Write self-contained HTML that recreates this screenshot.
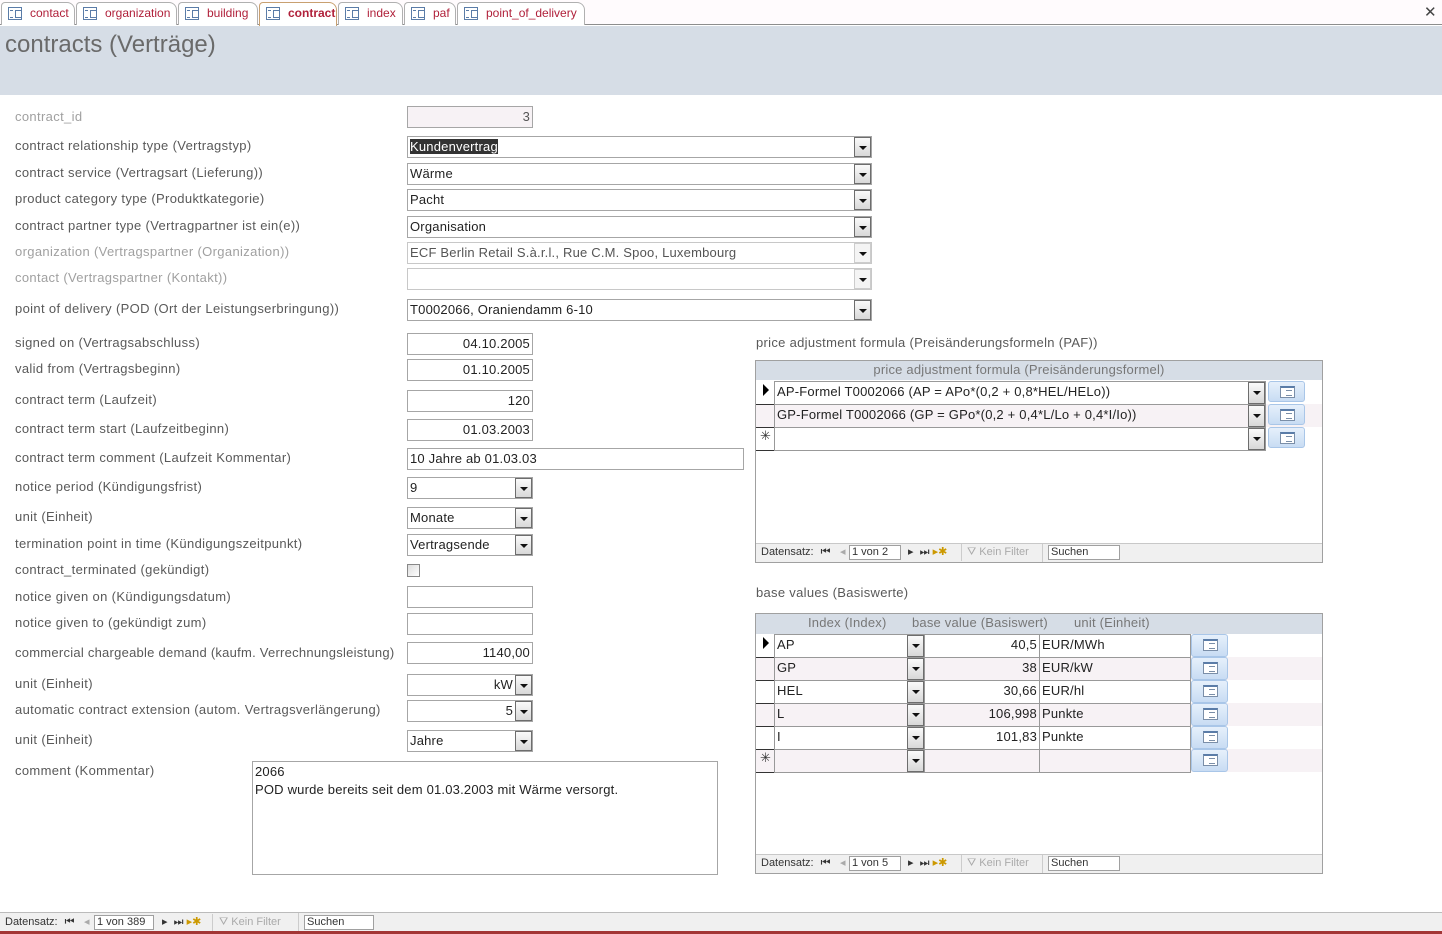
<!DOCTYPE html>
<html><head><meta charset="utf-8"><style>
*{box-sizing:border-box;margin:0;padding:0}
body{width:1442px;height:934px;position:relative;background:#fff;font-family:"Liberation Sans",sans-serif;font-size:13px;color:#333;overflow:hidden}
.a{position:absolute;white-space:nowrap}
.l{position:absolute;left:15px;color:#595959;white-space:nowrap;line-height:16px;margin-top:1px;letter-spacing:.35px}
.l.g{color:#a0a0a0}
.f{position:absolute;border:1px solid #a6a6a6;background:#fff;height:22px;line-height:20px;padding:0 2px;white-space:nowrap;overflow:hidden;color:#222;letter-spacing:.2px}
.r{text-align:right}
.dd{position:absolute;right:0;top:0;width:17px;height:20px;border:1px solid #6d6d6d;background:linear-gradient(#fafafa,#d8d8d8)}
.dd:after{content:"";position:absolute;left:4px;top:8px;border-left:4px solid transparent;border-right:4px solid transparent;border-top:4px solid #111}
.tab{position:absolute;top:2px;height:23px;border:1px solid #b0b0b0;border-bottom:none;border-radius:4px 8px 0 0;background:#fff;color:#b0203a;font-size:12px;line-height:21px;padding-left:28px}
.ti{position:absolute;left:6px;top:4px;width:14px;height:13px;border:1px solid #5a7ca8;background:#fff}
.ti:before{content:"";position:absolute;left:1px;top:2px;width:3px;height:6px;border-top:1px solid #5a7ca8;border-bottom:1px solid #5a7ca8}
.ti:after{content:"";position:absolute;left:6px;top:2px;width:5px;height:6px;border:1px solid #5a7ca8}
.btn{position:absolute;width:37px;height:21px;border:1px solid #a9c6e8;border-radius:3px;background:linear-gradient(#e6f0fb,#c8dcf3)}
.bi{position:absolute;left:11px;top:4px;width:15px;height:12px;border:1px solid #7a8ea8;border-top:2px solid #5a7ca8;background:#fff}
.bi:after{content:"";position:absolute;left:5px;top:2px;width:6px;height:4px;border-top:1px solid #7a8ea8;border-bottom:1px solid #7a8ea8}
.nav{position:absolute;height:19px;background:#f0f0f0;border-top:1px solid #c8c8c8;font-size:11px;color:#333;line-height:17px}
.nb{position:absolute;top:1px;height:15px;border:1px solid #a0a0a0;background:#fff;padding-left:2px;line-height:13px}
</style></head><body>
<div class="a" style="left:0;top:0;width:1442px;height:25px;background:#fffbfd;border-bottom:1px solid #8d8d8d"></div>
<div class="tab" style="left:1px;width:74px"><i class="ti"></i>contact</div>
<div class="tab" style="left:76px;width:101px"><i class="ti"></i>organization</div>
<div class="tab" style="left:178px;width:80px"><i class="ti"></i>building</div>
<div class="tab" style="left:259px;width:78px;font-weight:bold;border-color:#c8a070;height:24px"><i class="ti"></i>contract</div>
<div class="tab" style="left:338px;width:65px"><i class="ti"></i>index</div>
<div class="tab" style="left:404px;width:52px"><i class="ti"></i>paf</div>
<div class="tab" style="left:457px;width:128px"><i class="ti"></i>point_of_delivery</div>
<div class="a" style="left:1424px;top:3px;font-size:15px;color:#444">✕</div>
<div class="a" style="left:0;top:26px;width:1442px;height:69px;background:#d6dde6"></div>
<div class="a" style="left:5px;top:31px;font-size:24px;color:#6a6a6a">contracts (Verträge)</div>
<div class="l g" style="top:108px">contract_id</div>
<div class="l" style="top:137px">contract relationship type (Vertragstyp)</div>
<div class="l" style="top:164px">contract service (Vertragsart (Lieferung))</div>
<div class="l" style="top:190px">product category type (Produktkategorie)</div>
<div class="l" style="top:217px">contract partner type (Vertragpartner ist ein(e))</div>
<div class="l g" style="top:243px">organization (Vertragspartner (Organization))</div>
<div class="l g" style="top:269px">contact (Vertragspartner (Kontakt))</div>
<div class="l" style="top:300px">point of delivery (POD (Ort der Leistungserbringung))</div>
<div class="l" style="top:334px">signed on (Vertragsabschluss)</div>
<div class="l" style="top:360px">valid from (Vertragsbeginn)</div>
<div class="l" style="top:391px">contract term (Laufzeit)</div>
<div class="l" style="top:420px">contract term start (Laufzeitbeginn)</div>
<div class="l" style="top:449px">contract term comment (Laufzeit Kommentar)</div>
<div class="l" style="top:478px">notice period (Kündigungsfrist)</div>
<div class="l" style="top:508px">unit (Einheit)</div>
<div class="l" style="top:535px">termination point in time (Kündigungszeitpunkt)</div>
<div class="l" style="top:561px">contract_terminated (gekündigt)</div>
<div class="l" style="top:588px">notice given on (Kündigungsdatum)</div>
<div class="l" style="top:614px">notice given to (gekündigt zum)</div>
<div class="l" style="top:644px;letter-spacing:.25px">commercial chargeable demand (kaufm. Verrechnungsleistung)</div>
<div class="l" style="top:675px">unit (Einheit)</div>
<div class="l" style="top:701px">automatic contract extension (autom. Vertragsverlängerung)</div>
<div class="l" style="top:731px">unit (Einheit)</div>
<div class="l" style="top:762px">comment (Kommentar)</div>
<div class="f r" style="left:407px;top:106px;width:126px;background:#f7f2f5;color:#555">3</div>
<div class="f" style="left:407px;top:136px;width:465px"><span style="background:#333;color:#fff;">Kundenvertrag</span><i class="dd"></i></div>
<div class="f" style="left:407px;top:163px;width:465px">Wärme<i class="dd"></i></div>
<div class="f" style="left:407px;top:189px;width:465px">Pacht<i class="dd"></i></div>
<div class="f" style="left:407px;top:216px;width:465px">Organisation<i class="dd"></i></div>
<div class="f" style="left:407px;top:242px;width:465px;color:#555;border-color:#c8c8c8">ECF Berlin Retail S.à.r.l., Rue C.M. Spoo, Luxembourg<i class="dd" style="border-color:#ccc;background:#f4f4f4"></i></div>
<div class="f" style="left:407px;top:268px;width:465px;border-color:#c8c8c8"><i class="dd" style="border-color:#ccc;background:#f4f4f4"></i></div>
<div class="f" style="left:407px;top:299px;width:465px">T0002066, Oraniendamm 6-10<i class="dd"></i></div>
<div class="f r" style="left:407px;top:333px;width:126px">04.10.2005</div>
<div class="f r" style="left:407px;top:359px;width:126px">01.10.2005</div>
<div class="f r" style="left:407px;top:390px;width:126px">120</div>
<div class="f r" style="left:407px;top:419px;width:126px">01.03.2003</div>
<div class="f" style="left:407px;top:448px;width:337px">10 Jahre ab 01.03.03</div>
<div class="f" style="left:407px;top:477px;width:126px">9<i class="dd"></i></div>
<div class="f" style="left:407px;top:507px;width:126px">Monate<i class="dd"></i></div>
<div class="f" style="left:407px;top:534px;width:126px">Vertragsende<i class="dd"></i></div>
<div class="a" style="left:407px;top:564px;width:13px;height:13px;border:1px solid #888;background:linear-gradient(135deg,#ddd,#fff)"></div>
<div class="f" style="left:407px;top:586px;width:126px"></div>
<div class="f" style="left:407px;top:613px;width:126px"></div>
<div class="f r" style="left:407px;top:642px;width:126px">1140,00</div>
<div class="f r" style="left:407px;top:674px;width:126px;padding-right:19px">kW<i class="dd"></i></div>
<div class="f r" style="left:407px;top:700px;width:126px;padding-right:19px">5<i class="dd"></i></div>
<div class="f" style="left:407px;top:730px;width:126px">Jahre<i class="dd"></i></div>
<div class="f" style="left:252px;top:761px;width:466px;height:114px;white-space:normal;line-height:18px;padding-top:1px">2066<br>POD wurde bereits seit dem 01.03.2003 mit Wärme versorgt.</div>
<div class="a" style="left:756px;top:335px;color:#595959;letter-spacing:.3px">price adjustment formula (Preisänderungsformeln (PAF))</div>
<div class="a" style="left:755px;top:360px;width:568px;height:203px;border:1px solid #a0a0a0"></div>
<div class="a" style="left:756px;top:361px;width:566px;height:19px;background:#d6dde6;color:#777;text-align:center;line-height:18px;padding-right:40px;letter-spacing:.2px">price adjustment formula (Preisänderungsformel)</div>
<div class="a" style="left:756px;top:404px;width:566px;height:23px;background:#f7f2f5"></div>
<div class="f" style="left:774px;top:381px;width:492px;height:24px;border-color:#999">AP-Formel T0002066 (AP = APo*(0,2 + 0,8*HEL/HELo))<i class="dd" style="height:22px"></i></div>
<div class="f" style="left:774px;top:404px;width:492px;height:24px;border-color:#999;background:#f7f2f5">GP-Formel T0002066 (GP = GPo*(0,2 + 0,4*L/Lo + 0,4*I/Io))<i class="dd" style="height:22px"></i></div>
<div class="f" style="left:774px;top:427px;width:492px;height:24px;border-color:#999"><i class="dd" style="height:22px"></i></div>
<div class="a" style="left:756px;top:404px;width:18px;border-top:1px solid #333"></div>
<div class="a" style="left:756px;top:427px;width:18px;border-top:1px solid #333"></div>
<div class="a" style="left:756px;top:450px;width:18px;border-top:1px solid #333"></div>
<div class="a" style="left:763px;top:384px;border-top:6px solid transparent;border-bottom:6px solid transparent;border-left:6px solid #000"></div>
<div class="a" style="left:760px;top:428px;font-size:13px">✳</div>
<div class="btn" style="left:1268px;top:381px"><i class="bi"></i></div>
<div class="btn" style="left:1268px;top:404px"><i class="bi"></i></div>
<div class="btn" style="left:1268px;top:427px"><i class="bi"></i></div>
<div class="nav" style="left:756px;top:543px;width:566px">
<span class="a" style="left:5px">Datensatz: <b style="font-weight:normal;margin-left:4px">⏮</b></span>
<span class="a" style="left:84px;color:#aaa">◂</span>
<span class="nb" style="left:93px;width:52px">1 von 2</span>
<span class="a" style="left:152px">▸ &nbsp;⏭ <span style="color:#c90">▸✱</span></span>
<span class="a" style="left:205px;color:#aaa;border-left:1px solid #ccc;padding-left:5px">⛛ Kein Filter</span>
<span class="a" style="left:286px;height:18px;border-left:1px solid #ccc"></span>
<span class="nb" style="left:292px;width:72px">Suchen</span></div>
<div class="a" style="left:756px;top:585px;color:#595959;letter-spacing:.3px">base values (Basiswerte)</div>
<div class="a" style="left:755px;top:613px;width:568px;height:261px;border:1px solid #a0a0a0"></div>
<div class="a" style="left:756px;top:614px;width:566px;height:20px;background:#d6dde6;color:#777;line-height:18px;letter-spacing:.2px">
<span class="a" style="left:52px">Index (Index)</span><span class="a" style="left:156px">base value (Basiswert)</span><span class="a" style="left:318px">unit (Einheit)</span></div>
<div class="a" style="left:756px;top:657px;width:566px;height:23px;background:#f7f2f5"></div>
<div class="a" style="left:756px;top:703px;width:566px;height:23px;background:#f7f2f5"></div>
<div class="a" style="left:756px;top:749px;width:566px;height:23px;background:#f7f2f5"></div>
<div id="bv"></div>
<div class="a" style="left:763px;top:637px;border-top:6px solid transparent;border-bottom:6px solid transparent;border-left:6px solid #000"></div>
<div class="a" style="left:760px;top:750px;font-size:13px">✳</div>
<div class="nav" style="left:756px;top:854px;width:566px">
<span class="a" style="left:5px">Datensatz: <b style="font-weight:normal;margin-left:4px">⏮</b></span>
<span class="a" style="left:84px;color:#aaa">◂</span>
<span class="nb" style="left:93px;width:52px">1 von 5</span>
<span class="a" style="left:152px">▸ &nbsp;⏭ <span style="color:#c90">▸✱</span></span>
<span class="a" style="left:205px;color:#aaa;border-left:1px solid #ccc;padding-left:5px">⛛ Kein Filter</span>
<span class="a" style="left:286px;height:18px;border-left:1px solid #ccc"></span>
<span class="nb" style="left:292px;width:72px">Suchen</span></div>
<div class="nav" style="left:0;top:912px;width:1442px;height:20px;border-top:1px solid #bbb">
<span class="a" style="left:5px;top:1px">Datensatz: <b style="font-weight:normal;margin-left:4px">⏮</b></span>
<span class="a" style="left:84px;top:1px;color:#aaa">◂</span>
<span class="nb" style="left:94px;top:2px;width:60px">1 von 389</span>
<span class="a" style="left:162px;top:1px">▸ &nbsp;⏭ <span style="color:#c90">▸✱</span></span>
<span class="a" style="left:212px;top:1px;color:#aaa;border-left:1px solid #ccc;padding-left:6px">⛛ Kein Filter</span>
<span class="a" style="left:298px;height:19px;border-left:1px solid #ccc"></span>
<span class="nb" style="left:304px;top:2px;width:70px">Suchen</span></div>
<div class="a" style="left:0;top:931px;width:1442px;height:3px;background:#a33535"></div>
<script>
var rows=[["AP","40,5","EUR/MWh"],["GP","38","EUR/kW"],["HEL","30,66","EUR/hl"],["L","106,998","Punkte"],["I","101,83","Punkte"],["","",""]];
var h="";
rows.forEach(function(r,i){var y=634+i*23;var bg=(i%2)?"#f7f2f5":"#fff";
h+='<div class="f" style="left:774px;top:'+y+'px;width:151px;height:24px;border-color:#999;background:'+bg+'">'+r[0]+'<i class="dd" style="height:22px"></i></div>';
h+='<div class="f r" style="left:924px;top:'+y+'px;width:116px;height:24px;border-color:#999;background:'+bg+'">'+r[1]+'</div>';
h+='<div class="f" style="left:1039px;top:'+y+'px;width:152px;height:24px;border-color:#999;background:'+bg+'">'+r[2]+'</div>';
h+='<div class="btn" style="left:1191px;top:'+y+'px;height:23px"><i class="bi"></i></div>';
h+='<div class="a" style="left:756px;top:'+(y+23)+'px;width:18px;border-top:1px solid #333"></div>';});
document.getElementById("bv").innerHTML=h;
</script>
</body></html>
